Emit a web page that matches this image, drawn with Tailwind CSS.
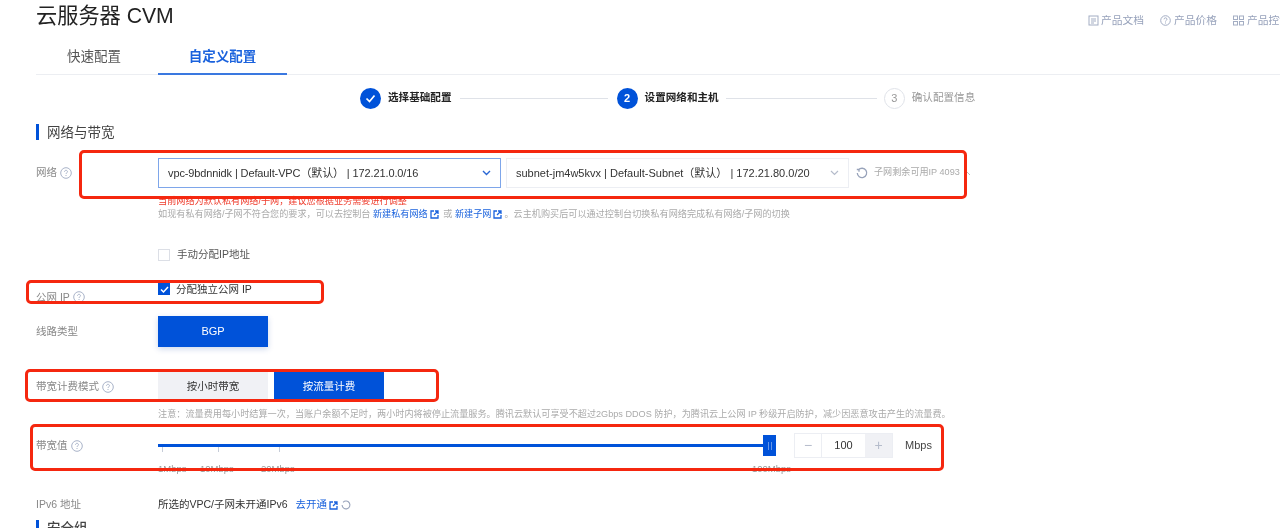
<!doctype html>
<html lang="zh-CN"><head><meta charset="utf-8"><title>云服务器 CVM</title>
<script src="https://cdn.jsdelivr.net/npm/@tailwindcss/browser@4"></script></head>
<body class="bg-white overflow-hidden">
<div class="relative w-[1280px] h-[528px] overflow-hidden blur-[0.6px] text-[#333] font-['Liberation_Sans','Noto_Sans_CJK_SC',sans-serif]">

<!-- header -->
<header class="h-[44px] pl-[36px] flex items-start justify-between">
  <h1 class="text-[21.200px] leading-[32px] text-[#222]">云服务器 CVM</h1>
  <div class="flex mt-[13px] h-[15px] w-[192px] shrink-0 overflow-hidden text-[10.750px] leading-[15px] text-[#97a2bb] whitespace-nowrap">
    <svg class="w-[11px] h-[11px] mt-[2px] mr-[2px] shrink-0" viewBox="0 0 11 11" fill="none" stroke="#a3adc3"><rect x="1" y="1" width="9" height="9"/><path d="M3 4h5M3 6h5M3 8h3"/></svg><span>产品文档</span>
    <svg class="w-[11px] h-[11px] mt-[2px] ml-[16px] mr-[3px] shrink-0" viewBox="0 0 11 11" fill="none" stroke="#a3adc3"><circle cx="5.5" cy="5.5" r="4.8"/><path d="M4 4.3c0-2 3-2 3 0 0 1-1.500 1-1.500 2.200M5.500 7.500v1"/></svg><span>产品价格</span>
    <svg class="w-[11px] h-[11px] mt-[2px] ml-[16px] mr-[3px] shrink-0" viewBox="0 0 11 11" fill="none" stroke="#a3adc3"><rect x=".5" y="1" width="4" height="3.500"/><rect x="6.500" y="1" width="4" height="3.500"/><rect x=".5" y="6.500" width="4" height="3.500"/><rect x="6.500" y="6.500" width="4" height="3.500"/></svg><span>产品控制台</span>
  </div>
</header>

<!-- tabs -->
<nav class="ml-[36px] h-[31px] flex border-b border-[#eceef2] text-[13.500px] leading-[26px]">
  <a class="w-[122px] pl-[31px] text-[#555]">快速配置</a>
  <a class="w-[129px] -mb-px text-center font-bold text-[#1a62dd] border-b-2 border-[#3a78e0]">自定义配置</a>
</nav>

<!-- steps -->
<div class="mt-[12px] h-[22px] pl-[360px] flex items-center text-[10.600px]">
  <span class="w-[21px] h-[21px] rounded-full bg-[#0052d9] flex items-center justify-center"><svg class="w-[11px] h-[11px]" viewBox="0 0 11 11" fill="none" stroke="#fff" stroke-width="1.700"><path d="M1.500 5.500l3 3 5-6"/></svg></span>
  <span class="ml-[7px] font-bold text-[#222] whitespace-nowrap">选择基础配置</span>
  <span class="ml-[8px] w-[148px] h-px bg-[#dfe2e8]"></span>
  <span class="ml-[9px] w-[21px] h-[21px] rounded-full bg-[#0052d9] text-white font-bold flex items-center justify-center text-[11px]">2</span>
  <span class="ml-[7px] font-bold text-[#222] whitespace-nowrap">设置网络和主机</span>
  <span class="ml-[7px] w-[151px] h-px bg-[#dfe2e8]"></span>
  <span class="ml-[7px] w-[21px] h-[21px] rounded-full border border-[#dfe2e8] text-[#999] flex items-center justify-center text-[11px]">3</span>
  <span class="ml-[7px] text-[#999] whitespace-nowrap">确认配置信息</span>
</div>

<!-- section -->
<h2 class="mt-[15px] ml-[36px] h-[16px] pl-[8px] border-l-[3px] border-[#0052d9] text-[13.500px] leading-[17px] text-[#444]">网络与带宽</h2>

<main class="pl-[36px] text-[10.500px]">
  <!-- network -->
  <div class="mt-[18px] flex h-[30px]">
    <div class="w-[122px] flex items-center gap-[3px] text-[#888]">网络<svg class="w-[12px] h-[12px]" viewBox="0 0 12 12" fill="none" stroke="#a9b3c8"><circle cx="6" cy="6" r="5.300"/><path d="M4.500 4.800c0-2 3-2 3 0 0 1-1.500 1-1.500 2.200M6 8v1"/></svg></div>
    <div class="w-[343px] h-[30px] px-[9px] flex items-center justify-between border border-[#7ea6ea] text-[11px] text-[#333] whitespace-nowrap">
      <span class="tracking-[-0.12px]">vpc-9bdnnidk | Default-VPC（默认） | 172.21.0.0/16</span>
      <svg class="w-[9px] h-[6px]" viewBox="0 0 9 6" fill="none" stroke="#2a67d4" stroke-width="1.400"><path d="M1 1l3.500 3.500L8 1"/></svg>
    </div>
    <div class="ml-[5px] w-[343px] h-[30px] px-[9px] flex items-center justify-between border border-[#eceef3] text-[11px] text-[#333] whitespace-nowrap">
      <span>subnet-jm4w5kvx | Default-Subnet（默认） | 172.21.80.0/20</span>
      <svg class="w-[9px] h-[6px]" viewBox="0 0 9 6" fill="none" stroke="#b5bccb" stroke-width="1.200"><path d="M1 1l3.500 3.500L8 1"/></svg>
    </div>
    <div class="ml-[7px] flex items-center text-[9.100px] text-[#aaa] whitespace-nowrap">
      <svg class="w-[12px] h-[12px] mr-[6px]" viewBox="0 0 12 12" fill="none" stroke="#98a3ba" stroke-width="1.300"><path d="M2.500 2.800A4.700 4.700 0 1 1 1.300 6M.8 2.500h2.200v2.200"/></svg>
      <span>子网剩余可用IP 4093</span>
      <svg class="w-[8px] h-[5px] ml-[3px]" viewBox="0 0 8 5" fill="none" stroke="#bbb"><path d="M1 4l3-3 3 3"/></svg>
    </div>
  </div>
  <div class="mt-[7px] ml-[122px] text-[9.150px] leading-[13px] text-[#ee3b2b] whitespace-nowrap">当前网络为默认私有网络/子网，建议您根据业务需要进行调整</div>
  <div class="ml-[122px] flex items-center text-[9.150px] leading-[13px] text-[#aaa] whitespace-nowrap">
    如现有私有网络/子网不符合您的要求，可以去控制台&nbsp;<span class="text-[#1a62dd]">新建私有网络</span>
    <svg class="w-[9px] h-[9px] mx-[2px]" viewBox="0 0 9 9" fill="none" stroke="#1a62dd" stroke-width="1.300"><path d="M4 1H1v7h7V5M5 1h3v3M8 1L4 5"/></svg>&nbsp;或&nbsp;<span class="text-[#1a62dd]">新建子网</span>
    <svg class="w-[9px] h-[9px] mx-[2px]" viewBox="0 0 9 9" fill="none" stroke="#1a62dd" stroke-width="1.300"><path d="M4 1H1v7h7V5M5 1h3v3M8 1L4 5"/></svg>。云主机购买后可以通过控制台切换私有网络完成私有网络/子网的切换
  </div>

  <label class="mt-[27px] ml-[122px] h-[13px] flex items-center gap-[7px] text-[#555]"><span class="w-[12px] h-[12px] border border-[#dcdfe6]"></span>手动分配IP地址</label>

  <!-- public ip -->
  <div class="mt-[22px] h-[22px] flex">
    <div class="w-[122px] flex items-end gap-[3px] text-[#888] leading-[16px]">公网 IP<svg class="w-[12px] h-[12px] mb-[2px]" viewBox="0 0 12 12" fill="none" stroke="#a9b3c8"><circle cx="6" cy="6" r="5.300"/><path d="M4.500 4.800c0-2 3-2 3 0 0 1-1.500 1-1.500 2.200M6 8v1"/></svg></div>
    <label class="flex items-start gap-[6px] text-[#333] leading-[13px]"><span class="w-[12px] h-[12px] bg-[#0052d9] flex items-center justify-center"><svg class="w-[9px] h-[9px]" viewBox="0 0 9 9" fill="none" stroke="#fff" stroke-width="1.500"><path d="M1 4.500l2.500 2.500 4.500-5"/></svg></span>分配独立公网 IP</label>
  </div>

  <!-- line type -->
  <div class="mt-[11px] h-[31px] flex">
    <div class="w-[122px] flex items-center text-[#888]">线路类型</div>
    <div class="w-[110px] h-[31px] bg-[#0052d9] text-white text-[11px] flex items-center justify-center shadow-[0_2px_6px_rgba(0,60,160,0.2)]">BGP</div>
  </div>

  <!-- billing -->
  <div class="mt-[25px] h-[29px] flex">
    <div class="w-[122px] flex items-center gap-[3px] text-[#888]">带宽计费模式<svg class="w-[12px] h-[12px]" viewBox="0 0 12 12" fill="none" stroke="#a9b3c8"><circle cx="6" cy="6" r="5.300"/><path d="M4.500 4.800c0-2 3-2 3 0 0 1-1.500 1-1.500 2.200M6 8v1"/></svg></div>
    <div class="w-[110px] bg-[#f0f1f5] text-[#333] flex items-center justify-center">按小时带宽</div>
    <div class="ml-[6px] w-[110px] bg-[#0052d9] text-white flex items-center justify-center">按流量计费</div>
  </div>
  <div class="mt-[7px] ml-[122px] text-[9.150px] leading-[13px] text-[#aaa] whitespace-nowrap">注意：流量费用每小时结算一次，当账户余额不足时，两小时内将被停止流量服务。腾讯云默认可享受不超过2Gbps DDOS 防护，为腾讯云上公网 IP 秒级开启防护，减少因恶意攻击产生的流量费。</div>

  <!-- bandwidth -->
  <div class="mt-[12px] h-[25px] flex items-center">
    <div class="w-[122px] flex items-center gap-[3px] text-[#888]">带宽值<svg class="w-[12px] h-[12px]" viewBox="0 0 12 12" fill="none" stroke="#a9b3c8"><circle cx="6" cy="6" r="5.300"/><path d="M4.500 4.800c0-2 3-2 3 0 0 1-1.500 1-1.500 2.200M6 8v1"/></svg></div>
    <div class="relative w-[618px] h-[25px]">
      <div class="absolute left-0 top-[10.500px] w-[610px] h-[3px] bg-[#0052d9]"></div>
      <div class="absolute left-[4px] top-[14px] w-px h-[5px] bg-[#c6ccd8]"></div>
      <div class="absolute left-[60px] top-[14px] w-px h-[5px] bg-[#c6ccd8]"></div>
      <div class="absolute left-[121px] top-[14px] w-px h-[5px] bg-[#c6ccd8]"></div>
      <div class="absolute left-[605px] top-[2px] w-[13px] h-[21px] bg-[#0052d9] flex items-center justify-center gap-[2px]"><span class="w-px h-[8px] bg-white/40"></span><span class="w-px h-[8px] bg-white/40"></span></div>
      <span class="absolute left-0 top-[29px] text-[9.500px] leading-[13px] text-[#999]">1Mbps</span>
      <span class="absolute left-[42px] top-[29px] text-[9.500px] leading-[13px] text-[#999]">10Mbps</span>
      <span class="absolute left-[103px] top-[29px] text-[9.500px] leading-[13px] text-[#999]">20Mbps</span>
      <span class="absolute left-[594px] top-[29px] text-[9.500px] leading-[13px] text-[#999]">100Mbps</span>
    </div>
    <div class="ml-[18px] w-[99px] h-[25px] flex border border-[#eceef3] text-[11px]">
      <span class="w-[27px] flex items-center justify-center text-[#b5bccb] text-[14px] border-r border-[#eceef3]">−</span>
      <span class="flex-1 flex items-center justify-center text-[#333]">100</span>
      <span class="w-[27px] bg-[#f0f1f5] flex items-center justify-center text-[#b5bccb] text-[14px]">+</span>
    </div>
    <span class="ml-[12px] text-[11px] text-[#444]">Mbps</span>
  </div>

  <!-- ipv6 -->
  <div class="mt-[39px] h-[16px] flex items-center">
    <div class="w-[122px] text-[#888]">IPv6 地址</div>
    <span class="text-[#333]">所选的VPC/子网未开通IPv6</span>
    <span class="ml-[8px] text-[#1a62dd]">去开通</span>
    <svg class="w-[9px] h-[9px] ml-[2px]" viewBox="0 0 9 9" fill="none" stroke="#1a62dd" stroke-width="1.300"><path d="M4 1H1v7h7V5M5 1h3v3M8 1L4 5"/></svg>
    <svg class="w-[10px] h-[10px] ml-[3px]" viewBox="0 0 12 12" fill="none" stroke="#98a3ba" stroke-width="1.300"><path d="M2.500 2.800A4.700 4.700 0 1 1 1.300 6"/></svg>
  </div>
</main>
<h2 class="mt-[7px] ml-[36px] h-[16px] pl-[8px] border-l-[3px] border-[#0052d9] text-[13.500px] leading-[17px] font-medium text-[#444]">安全组</h2>

<!-- annotation boxes -->
<div class="absolute left-[79px] top-[150px] w-[888px] h-[49px] border-[3px] border-[#f5270f] rounded-[5px]"></div>
<div class="absolute left-[26px] top-[280px] w-[298px] h-[24px] border-[3px] border-[#f5270f] rounded-[5px]"></div>
<div class="absolute left-[25px] top-[369px] w-[414px] h-[33px] border-[3px] border-[#f5270f] rounded-[5px]"></div>
<div class="absolute left-[30px] top-[424px] w-[914px] h-[47px] border-[3px] border-[#f5270f] rounded-[5px]"></div>
</div>
</body></html>
